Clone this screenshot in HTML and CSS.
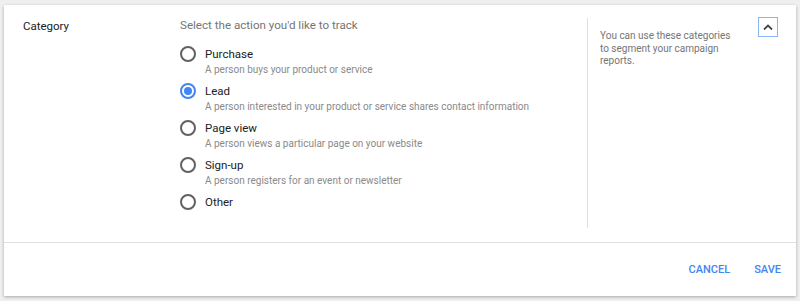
FILE: index.html
```html
<!DOCTYPE html>
<html>
<head>
    <title>Conversion category</title>
    <link rel="stylesheet" href="styles.css">
</head>
<body>
    <div class="card">
        <div class="section">
            <div class="label">Category</div>
            <div class="main">
                <div class="prompt">Select the action you'd like to track</div>
                <div class="options">
                    <div class="option">
                        <span class="radio"></span>
                        <div>
                            <div class="name">Purchase</div>
                            <div class="desc">A person buys your product or service</div>
                        </div>
                    </div>
                    <div class="option">
                        <span class="radio checked"></span>
                        <div>
                            <div class="name">Lead</div>
                            <div class="desc">A person interested in your product or service shares contact information</div>
                        </div>
                    </div>
                    <div class="option">
                        <span class="radio"></span>
                        <div>
                            <div class="name">Page view</div>
                            <div class="desc">A person views a particular page on your website</div>
                        </div>
                    </div>
                    <div class="option">
                        <span class="radio"></span>
                        <div>
                            <div class="name">Sign-up</div>
                            <div class="desc">A person registers for an event or newsletter</div>
                        </div>
                    </div>
                    <div class="option">
                        <span class="radio"></span>
                        <div>
                            <div class="name">Other</div>
                        </div>
                    </div>
                </div>
            </div>
            <div class="side">
                <p class="help">You can use these categories to segment your campaign reports.</p>
                <button class="collapse">
                    <svg width="10" height="6" viewBox="0 0 10 6"><path d="M1 5.5 L5 1.5 L9 5.5" fill="none" stroke="#444" stroke-width="1.8"/></svg>
                </button>
            </div>
        </div>
        <div class="footer">
            <button class="btn">CANCEL</button>
            <button class="btn">SAVE</button>
        </div>
    </div>
</body>
</html>
```

FILE: styles.css
```css
body {
    margin: 0; background-color: #efefef;
    font-family: Roboto, "Liberation Sans", sans-serif;
    padding: 5px 4px;
}
.card {
    background: #fff; width: 792px; height: 291px;
    box-shadow: 0 1px 3px rgba(0,0,0,0.3);
    display: flex; flex-direction: column;
}
.section {
    display: grid; grid-template-columns: 157px 407px 1fr;
    height: 225px; padding: 12px 18px 0 19px;
    border-bottom: 1px solid #e0e0e0;
}
.label { color: #212121; font-size: 11.5px; line-height: 16px; padding-top: 1px }
.prompt { color: #757575; font-size: 11.6px; line-height: 16px }
.options { display: flex; flex-direction: column; gap: 5px; margin-top: 13px }
.option { display: flex; gap: 9px }
.radio {
    width: 16px; height: 16px; box-sizing: border-box;
    border: 2px solid #616161; border-radius: 50%;
    display: flex; align-items: center; justify-content: center;
    flex: none;
}
.radio.checked { border-color: #4285f4 }
.radio.checked::after {
    content: ""; width: 8px; height: 8px; border-radius: 50%;
    background: #4285f4;
}
.name { color: #212121; font-size: 11.5px; line-height: 16px }
.desc { color: #8a8a8a; font-size: 10px; line-height: 16px }
.side {
    margin-top: 1px; height: 210px; border-left: 1px solid #e0e0e0;
    display: flex; justify-content: space-between; align-items: flex-start;
    padding-left: 12px;
}
.help {
    margin: 12px 0 0; width: 135px; color: #757575;
    font-size: 10px; line-height: 12.6px;
}
.collapse {
    width: 20px; height: 20px; margin-top: -1px; padding: 0;
    border: 1px solid #8ab4f8; background: #fff;
    display: flex; align-items: center; justify-content: center;
}
.footer {
    flex: 1; display: flex; justify-content: flex-end; align-items: center;
    gap: 24px; padding-right: 15px;
}
.btn {
    border: 0; background: none; padding: 0;
    color: #4285f4; font-family: inherit; font-size: 11px; font-weight: 500;
}
```
